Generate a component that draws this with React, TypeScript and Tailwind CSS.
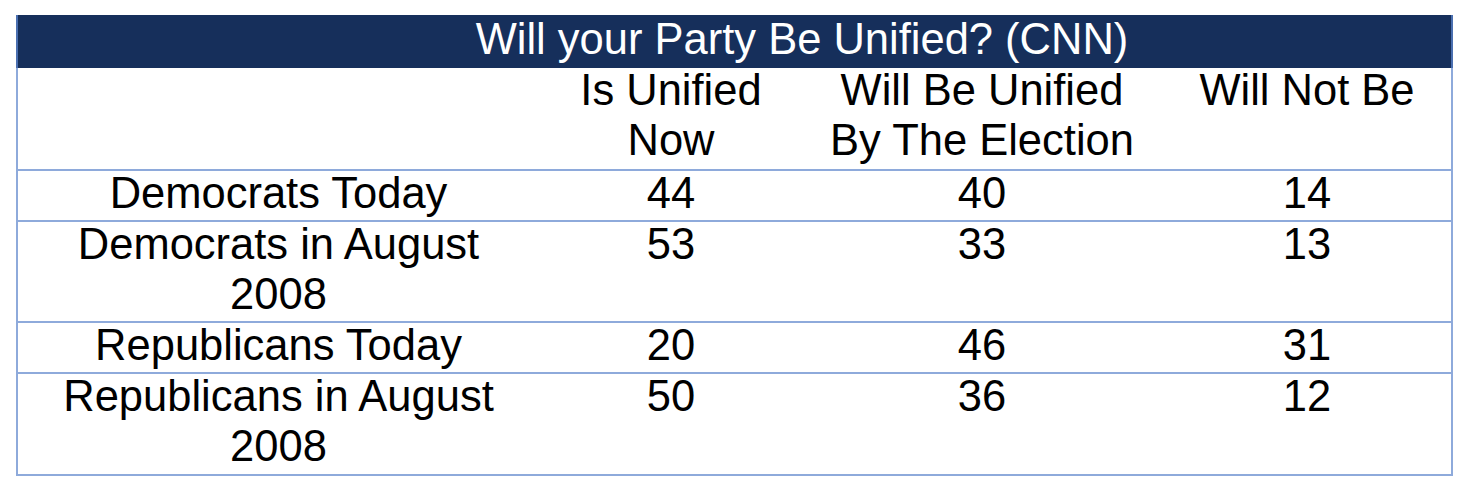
const rows = [
  { label: ["Democrats Today"], values: ["44", "40", "14"], h: "h-[51px]" },
  { label: ["Democrats in August", "2008"], values: ["53", "33", "13"], h: "h-[101px]" },
  { label: ["Republicans Today"], values: ["20", "46", "31"], h: "h-[51px]" },
  { label: ["Republicans in August", "2008"], values: ["50", "36", "12"], h: "h-[102px]" },
];

const cols = "grid grid-cols-[521px_264px_358px_292px]";

function Cell({ lines }: { lines: string[] }) {
  return (
    <div className="text-center -translate-y-[3px]">
      {lines.map((l) => (
        <div key={l}>{l}</div>
      ))}
    </div>
  );
}

export default function App() {
  return (
    <div
      className="w-[1468px] h-[488px] bg-white pt-[15px] pl-[16px] text-black text-[43.5px] leading-[50px]"
      style={{ fontFamily: '"Liberation Sans", Arial, sans-serif' }}
    >
      <div className="w-[1437px] border-x-2 border-b-2 border-[#8eaadb]">
        {/* title bar */}
        <div className="h-[53px] bg-[#162f5b] text-white text-center pl-[135px] -mx-[2px] border-x-2 border-[#4a6fb0]">
          <div className="-translate-y-[1px]">Will your Party Be Unified? (CNN)</div>
        </div>
        <div className={`${cols} h-[101px]`}>
          <div />
          <Cell lines={["Is Unified", "Now"]} />
          <Cell lines={["Will Be Unified", "By The Election"]} />
          <Cell lines={["Will Not Be"]} />
        </div>
        {rows.map((r) => (
          <div key={r.label.join(" ")} className={`${cols} ${r.h} border-t-2 border-[#8eaadb]`}>
            <Cell lines={r.label} />
            {r.values.map((v, i) => (
              <Cell key={i} lines={[v]} />
            ))}
          </div>
        ))}
      </div>
    </div>
  );
}
